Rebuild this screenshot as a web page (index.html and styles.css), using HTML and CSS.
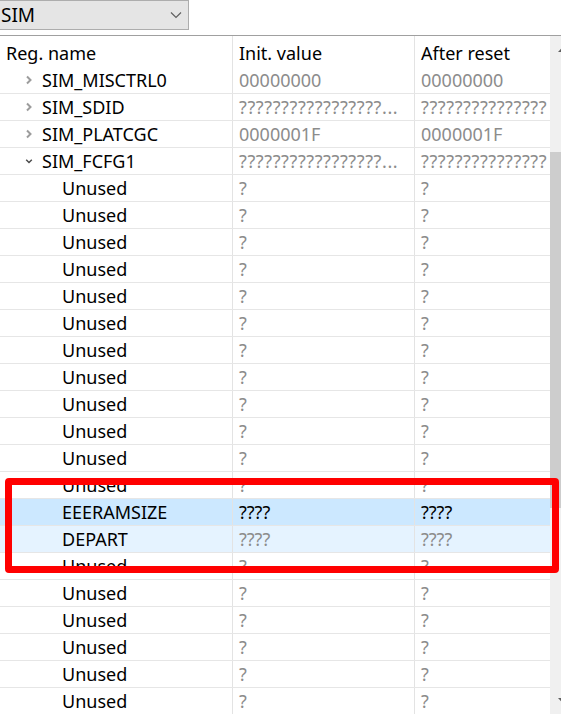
FILE: index.html
```html
<!DOCTYPE html>
<html>
<head>
<meta charset="utf-8">
<link rel="stylesheet" href="styles.css">
</head>
<body>
<div class="page">
  <div class="combo">
    <span class="combo-text">SIM</span>
    <svg class="combo-arrow" width="12" height="8" viewBox="0 0 12 8"><polyline points="1,1.5 6,6.5 11,1.5" fill="none" stroke="#606060" stroke-width="1.2"/></svg>
  </div>
  <div class="view">
    <div class="table">
      <div class="row header">
        <div class="cell c1">Reg. name</div>
        <div class="cell c2">Init. value</div>
        <div class="cell c3">After reset</div>
      </div>
      <div class="row">
        <div class="cell c1 top"><svg class="exp" width="8" height="10" viewBox="0 0 8 10"><polyline points="2,1.5 5.5,5 2,8.5" fill="none" stroke="#9c9c9c" stroke-width="2"/></svg>SIM_MISCTRL0</div>
        <div class="cell c2 val">00000000</div>
        <div class="cell c3 val">00000000</div>
      </div>
      <div class="row">
        <div class="cell c1 top"><svg class="exp" width="8" height="10" viewBox="0 0 8 10"><polyline points="2,1.5 5.5,5 2,8.5" fill="none" stroke="#9c9c9c" stroke-width="2"/></svg>SIM_SDID</div>
        <div class="cell c2 val q">?????????????????...</div>
        <div class="cell c3 val q">???????????????</div>
      </div>
      <div class="row">
        <div class="cell c1 top"><svg class="exp" width="8" height="10" viewBox="0 0 8 10"><polyline points="2,1.5 5.5,5 2,8.5" fill="none" stroke="#9c9c9c" stroke-width="2"/></svg>SIM_PLATCGC</div>
        <div class="cell c2 val">0000001F</div>
        <div class="cell c3 val">0000001F</div>
      </div>
      <div class="row">
        <div class="cell c1 top"><svg class="exp" width="8" height="10" viewBox="0 0 10 10"><polyline points="1.5,3.5 5,7 8.5,3.5" fill="none" stroke="#4a4a4a" stroke-width="1.8"/></svg>SIM_FCFG1</div>
        <div class="cell c2 val q">?????????????????...</div>
        <div class="cell c3 val q">???????????????</div>
      </div>
      <div class="row"><div class="cell c1 child">Unused</div><div class="cell c2 val">?</div><div class="cell c3 val">?</div></div>
      <div class="row"><div class="cell c1 child">Unused</div><div class="cell c2 val">?</div><div class="cell c3 val">?</div></div>
      <div class="row"><div class="cell c1 child">Unused</div><div class="cell c2 val">?</div><div class="cell c3 val">?</div></div>
      <div class="row"><div class="cell c1 child">Unused</div><div class="cell c2 val">?</div><div class="cell c3 val">?</div></div>
      <div class="row"><div class="cell c1 child">Unused</div><div class="cell c2 val">?</div><div class="cell c3 val">?</div></div>
      <div class="row"><div class="cell c1 child">Unused</div><div class="cell c2 val">?</div><div class="cell c3 val">?</div></div>
      <div class="row"><div class="cell c1 child">Unused</div><div class="cell c2 val">?</div><div class="cell c3 val">?</div></div>
      <div class="row"><div class="cell c1 child">Unused</div><div class="cell c2 val">?</div><div class="cell c3 val">?</div></div>
      <div class="row"><div class="cell c1 child">Unused</div><div class="cell c2 val">?</div><div class="cell c3 val">?</div></div>
      <div class="row"><div class="cell c1 child">Unused</div><div class="cell c2 val">?</div><div class="cell c3 val">?</div></div>
      <div class="row"><div class="cell c1 child">Unused</div><div class="cell c2 val">?</div><div class="cell c3 val">?</div></div>
      <div class="row"><div class="cell c1 child">Unused</div><div class="cell c2 val">?</div><div class="cell c3 val">?</div></div>
      <div class="row selected"><div class="cell c1 child">EEERAMSIZE</div><div class="cell c2">????</div><div class="cell c3">????</div></div>
      <div class="row hover"><div class="cell c1 child">DEPART</div><div class="cell c2 val">????</div><div class="cell c3 val">????</div></div>
      <div class="row"><div class="cell c1 child">Unused</div><div class="cell c2 val">?</div><div class="cell c3 val">?</div></div>
      <div class="row"><div class="cell c1 child">Unused</div><div class="cell c2 val">?</div><div class="cell c3 val">?</div></div>
      <div class="row"><div class="cell c1 child">Unused</div><div class="cell c2 val">?</div><div class="cell c3 val">?</div></div>
      <div class="row"><div class="cell c1 child">Unused</div><div class="cell c2 val">?</div><div class="cell c3 val">?</div></div>
      <div class="row"><div class="cell c1 child">Unused</div><div class="cell c2 val">?</div><div class="cell c3 val">?</div></div>
      <div class="row"><div class="cell c1 child">Unused</div><div class="cell c2 val">?</div><div class="cell c3 val">?</div></div>
    </div>
    <div class="scrollbar">
      <svg class="sb-up" width="17" height="10" viewBox="0 0 17 10"><polygon points="4,8 8.5,3 13,8" fill="#606060"/></svg>
      <div class="thumb"></div>
      <svg class="sb-down" width="17" height="10" viewBox="0 0 17 10"><polygon points="4,2 8.5,7 13,2" fill="#606060"/></svg>
    </div>
  </div>
  <div class="highlight-box"></div>
</div>
</body>
</html>
```
FILE: styles.css
```css
html, body {
  margin: 0;
  padding: 0;
  background: #ffffff;
  overflow: hidden;
}
.page {
  position: relative;
  width: 561px;
  height: 714px;
  overflow: hidden;
  font-family: "Noto Sans", "Liberation Sans", sans-serif;
  font-size: 18px;
  color: #000;
}
.combo {
  box-sizing: border-box;
  width: 189px;
  height: 30px;
  background: #e5e5e5;
  border: 1px solid #adadad;
  border-left: none;
  display: flex;
  align-items: center;
  justify-content: space-between;
  padding: 0 6px 0 1px;
}
.combo-text {
  font-size: 19px;
  line-height: 1;
}
.view {
  margin-top: 5px;
  border-top: 1px solid #a0a0a0;
  display: flex;
  width: 578px;
}
.table {
  width: 550px;
  flex: none;
}
.row {
  display: grid;
  grid-template-columns: 233px 182px 135px;
  height: 27px;
  box-sizing: border-box;
  border-bottom: 1px solid #e6e6e6;
}
.row.header {
  height: 31px;
  border-bottom: none;
}
.cell {
  box-sizing: border-box;
  border-right: 1px solid #e3e3e3;
  white-space: nowrap;
  overflow: hidden;
  display: flex;
  align-items: center;
  padding-left: 6px;
  line-height: 26px;
}
.header .cell {
  padding-top: 2px;
}
.cell.c3 {
  border-right: none;
}
.cell.top {
  padding-left: 25px;
}
.cell.top .exp {
  margin-right: 9px;
  flex: none;
}
.cell.child {
  padding-left: 62px;
}
.val {
  color: #8c8c8c;
}
.q {
  letter-spacing: 0.6px;
}
.row.selected {
  background: #cce8ff;
}
.row.hover {
  background: #e5f3ff;
}
.scrollbar {
  position: relative;
  width: 17px;
  flex: none;
  background: #f0f0f0;
}
.sb-up {
  position: absolute;
  top: 8px;
  left: 4px;
}
.sb-down {
  position: absolute;
  bottom: 9px;
  left: 4px;
}
.thumb {
  position: absolute;
  left: 0;
  width: 17px;
  top: 116px;
  height: 356px;
  background: #cdcdcd;
}
.highlight-box {
  position: absolute;
  left: 5px;
  top: 478px;
  width: 554px;
  height: 95px;
  box-sizing: border-box;
  border: 7px solid #ff0000;
  border-radius: 4px;
}
```
